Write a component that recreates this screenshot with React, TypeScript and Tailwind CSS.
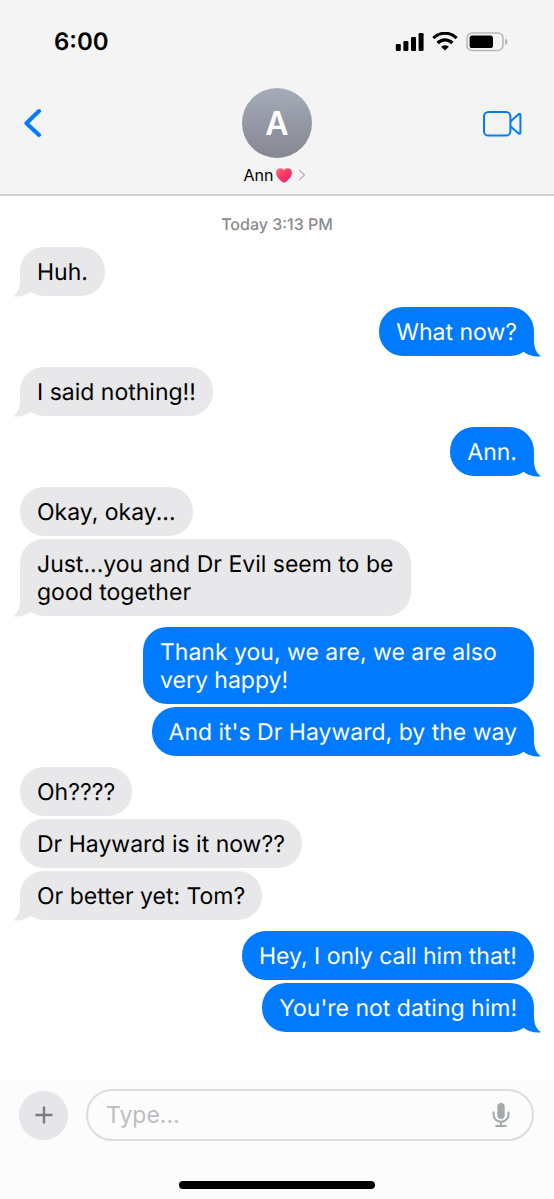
import React from "react";
import clsx from "clsx";

type Message = {
  id: number;
  text: string;
};

type MessageGroup = {
  id: number;
  mine: boolean;
  messages: Message[];
};

const groups: MessageGroup[] = [
  { id: 1, mine: false, messages: [{ id: 1, text: "Huh." }] },
  { id: 2, mine: true, messages: [{ id: 2, text: "What now?" }] },
  { id: 3, mine: false, messages: [{ id: 3, text: "I said nothing!!" }] },
  { id: 4, mine: true, messages: [{ id: 4, text: "Ann." }] },
  {
    id: 5,
    mine: false,
    messages: [
      { id: 5, text: "Okay, okay..." },
      { id: 6, text: "Just...you and Dr Evil seem to be good together" },
    ],
  },
  {
    id: 6,
    mine: true,
    messages: [
      { id: 7, text: "Thank you, we are, we are also very happy!" },
      { id: 8, text: "And it's Dr Hayward, by the way" },
    ],
  },
  {
    id: 7,
    mine: false,
    messages: [
      { id: 9, text: "Oh????" },
      { id: 10, text: "Dr Hayward is it now??" },
      { id: 11, text: "Or better yet: Tom?" },
    ],
  },
  {
    id: 8,
    mine: true,
    messages: [
      { id: 12, text: "Hey, I only call him that!" },
      { id: 13, text: "You're not dating him!" },
    ],
  },
];

const StatusBar = () => (
  <div className="flex h-7 items-center justify-between pr-[46px] pl-[54px]">
    <span className="text-2xl leading-7 font-semibold">6:00</span>
    <div className="flex items-center gap-2">
      {/* signal */}
      <svg width="29" height="20" viewBox="0 0 29 20" aria-hidden="true">
        <rect x="0.8" y="12" width="5" height="7" rx="1.2" />
        <rect x="8.4" y="9" width="5" height="10" rx="1.2" />
        <rect x="16" y="5" width="5" height="14" rx="1.2" />
        <rect x="23.6" y="1" width="5" height="18" rx="1.2" />
      </svg>
      {/* wifi */}
      <svg width="26" height="20" viewBox="0 0 26 20" fill="none" stroke="#000" aria-hidden="true">
        <path d="M1.4 6.2C8 -0.4 18 -0.4 24.6 6.2" strokeWidth="3.2" />
        <path d="M5.6 11C10 6.8 16 6.8 20.4 11" strokeWidth="3.2" />
        <path d="M13 18.4L9.2 14.8C11.4 12.8 14.6 12.8 16.8 14.8Z" fill="#000" stroke="none" />
      </svg>
      {/* battery */}
      <svg width="42" height="20" viewBox="0 0 42 20" aria-hidden="true">
        <rect x="1" y="1" width="36" height="17.5" rx="5" fill="none" stroke="#b9b9b9" strokeWidth="1.6" />
        <rect x="3.6" y="3.6" width="23.4" height="12.4" rx="2.6" />
        <path d="M39 6.6C42.4 7.6 42.4 12 39 13Z" fill="#b9b9b9" />
      </svg>
    </div>
  </div>
);

const Tail = ({ mine }: { mine: boolean }) => (
  <svg
    width="24"
    height="26"
    viewBox="0 0 24 26"
    aria-hidden="true"
    className={clsx(
      "absolute -bottom-px",
      mine ? "-right-[7px] -scale-x-100 fill-[#007aff]" : "-left-[7px] fill-[#e8e8ea]"
    )}
  >
    <path d="M7 0V9C7 16 5.4 21.6 0 25.3C6.6 26.3 12.4 24.4 17 21L22 12Z" />
  </svg>
);

const Bubble = ({ text, mine, last }: { text: string; mine: boolean; last: boolean }) => (
  <li
    className={clsx(
      "relative max-w-[391px] rounded-3xl px-[17px] pt-[11px] pb-[10px]",
      mine ? "bg-[#007aff] text-white" : "bg-[#e8e8ea] text-black"
    )}
  >
    {last && <Tail mine={mine} />}
    <p className="relative">{text}</p>
  </li>
);

const Header = () => (
  <header className="border-b-2 border-[#cfcfcf] bg-[#f4f4f4] pt-7 pb-2">
    <StatusBar />
    <div className="mt-8 grid grid-cols-3 items-start px-6">
      <button type="button" aria-label="Back" className="mt-5 justify-self-start">
        <svg width="18" height="30" viewBox="0 0 18 30" fill="none" stroke="#007aff" strokeWidth="4" strokeLinecap="round" strokeLinejoin="round">
          <path d="M15 3L2.4 15.2L15 27" />
        </svg>
      </button>
      <button type="button" className="flex flex-col items-center gap-[7px] justify-self-center pb-px">
        <span className="flex h-[70px] w-[70px] items-center justify-center rounded-full bg-linear-to-b from-[#a5abb9] to-[#858791] pt-[2px] text-[32px] leading-8 font-semibold text-white">
          A
        </span>
        <span className="flex items-center text-base leading-5">
          Ann
          <svg width="18" height="18" viewBox="0 0 18 18" className="ml-[2px]" aria-hidden="true">
            <defs>
              <linearGradient id="heart" x1="0" y1="0" x2="1" y2="1">
                <stop offset="0" stopColor="#ff6a7d" />
                <stop offset="0.45" stopColor="#fb3b64" />
                <stop offset="1" stopColor="#f0127a" />
              </linearGradient>
            </defs>
            <path
              d="M9 4.2C10.4 1.4 16.6 1.2 16.9 6.4C17.1 11 12.6 14.6 9.4 16.6Q9 16.8 8.6 16.6C5.4 14.6 0.9 11 1.1 6.4C1.4 1.2 7.6 1.4 9 4.2Z"
              fill="url(#heart)"
            />
          </svg>
          <svg width="8" height="12" viewBox="0 0 8 12" className="mr-1 ml-[5px]" fill="none" stroke="#bcbcbe" strokeWidth="1.6" aria-hidden="true">
            <path d="M1 1L6.4 6L1 11" />
          </svg>
        </span>
      </button>
      <button type="button" aria-label="Video call" className="mt-[22px] mr-2 justify-self-end">
        <svg width="40" height="28" viewBox="0 0 40 28" fill="none" stroke="#007aff" strokeWidth="2" strokeLinejoin="round">
          <rect x="2" y="2" width="26.4" height="23.6" rx="4.4" />
          <path d="M28.4 11.4L36.6 4.2Q38.4 3 38.4 5V22.6Q38.4 24.6 36.6 23.4L28.4 16.2" />
        </svg>
      </button>
    </div>
  </header>
);

const Composer = () => (
  <footer className="bg-[#fcfcfc] pb-[10px]">
    <form className="flex items-center gap-[18px] pt-2 pr-5 pl-[19px]" onSubmit={(e) => e.preventDefault()}>
      <button
        type="button"
        aria-label="Add attachment"
        className="flex h-[49px] w-[49px] shrink-0 items-center justify-center rounded-full bg-[#e5e5ea]"
      >
        <svg width="18" height="18" viewBox="0 0 18 18" stroke="#7c7c81" strokeWidth="2.4" strokeLinecap="round">
          <path d="M9 1.4V16.6M1.4 9H16.6" />
        </svg>
      </button>
      <div className="flex h-[52px] min-w-0 flex-1 items-center rounded-full border-2 border-[#dcdcdc] pr-[22px] pl-[18px]">
        <input
          type="text"
          aria-label="Message"
          placeholder="Type..."
          className="min-w-0 flex-1 bg-transparent outline-none placeholder:text-[#bdbec0]"
        />
        <button type="button" aria-label="Dictate">
          <svg width="18" height="26" viewBox="0 0 18 26" fill="none" stroke="#a3a8ab" strokeWidth="2">
            <rect x="5.3" y="1" width="7.4" height="16" rx="3.7" fill="#a3a8ab" stroke="none" />
            <path d="M1.5 9.6V12C1.5 22.4 16.5 22.4 16.5 12V9.6M9 19.8V23.6M3.4 24H14.6" />
          </svg>
        </button>
      </div>
    </form>
    <div className="mx-auto mt-10 h-2 w-[196px] rounded-full bg-black" />
  </footer>
);

const App = () => {
  return (
    <div className="flex min-h-screen flex-col bg-white font-['Inter',sans-serif] text-[23px] leading-7 text-black [text-rendering:geometricPrecision]">
      <Header />
      <main className="flex-1 px-5 pt-4 pb-12">
        <p className="text-center text-base leading-6 font-medium text-[#8a8a8e]">Today 3:13 PM</p>
        <div className="mt-[11px] flex flex-col gap-[11px]">
          {groups.map((group) => (
            <ul
              key={group.id}
              className={clsx("flex flex-col gap-[3px]", group.mine ? "items-end" : "items-start")}
            >
              {group.messages.map((message, i) => (
                <Bubble
                  key={message.id}
                  text={message.text}
                  mine={group.mine}
                  last={i === group.messages.length - 1}
                />
              ))}
            </ul>
          ))}
        </div>
      </main>
      <Composer />
    </div>
  );
};

export default App;
